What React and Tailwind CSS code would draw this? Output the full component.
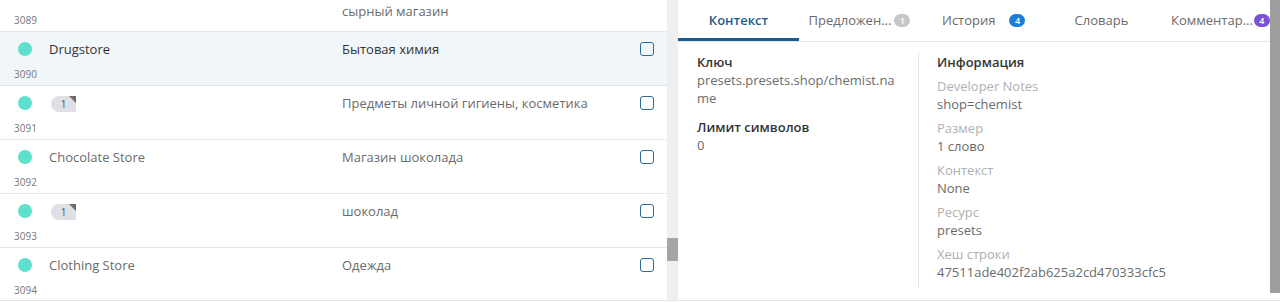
import React from 'react';

const rows = [
  { id: 3089, tr: 'сырный магазин', cut: true },
  { id: 3090, name: 'Drugstore', tr: 'Бытовая химия', active: true },
  { id: 3091, badge: true, tr: 'Предметы личной гигиены, косметика' },
  { id: 3092, name: 'Chocolate Store', tr: 'Магазин шоколада' },
  { id: 3093, badge: true, tr: 'шоколад' },
  { id: 3094, name: 'Clothing Store', tr: 'Одежда' },
];

const info = [
  ['Developer Notes', 'shop=chemist'],
  ['Размер', '1 слово'],
  ['Контекст', 'None'],
  ['Ресурс', 'presets'],
  ['Хеш строки', '47511ade402f2ab625a2cd470333cfc5'],
];

function Badge() {
  return (
    <div className="relative w-[25px] h-[16px] mt-[2px] ml-[2px] bg-[#dfe0e5] rounded-l-full flex items-center justify-center text-[10px] text-[#555] overflow-hidden">
      1
      <span className="absolute top-0 right-0 w-0 h-0 border-t-[7px] border-l-[7px] border-t-[#6b6b6b] border-l-transparent" />
    </div>
  );
}

function Row({ row }) {
  const tone = row.active ? 'text-[#333]' : 'text-[#6b6b6b]';
  return (
    <div className={`flex h-[54px] border-b border-[#e4e6ea] ${row.active ? 'bg-[#f1f6fb]' : 'bg-white'}`}>
      <div className="w-[49px] shrink-0 flex flex-col pl-[14px] pt-[10px]">
        <div className={`ml-[4px] w-[14px] h-[14px] rounded-full ${row.cut ? '' : 'bg-[#5fe0cd]'}`} />
        <div className="mt-[12px] text-[10px] leading-[12px] text-[#777]">{row.id}</div>
      </div>
      <div className={`w-[293px] shrink-0 pt-[8px] text-[13px] leading-[18px] ${tone}`}>
        {row.badge ? <Badge /> : row.name}
      </div>
      {/* first row is scrolled: only the wrapped tail of its translation shows */}
      <div className={`flex-1 text-[13px] leading-[18px] ${row.cut ? 'pt-[24px]' : 'pt-[8px]'} ${tone}`}>
        {row.tr}
      </div>
      <div className="w-[27px] shrink-0 pt-[10px]">
        {!row.cut && <div className="w-[14px] h-[14px] rounded-[3px] border-[1.5px] border-[#2d6c97]" />}
      </div>
    </div>
  );
}

function Tab({ label, count, color, active, className }) {
  return (
    <div
      className={`h-[41px] flex items-center text-[13px] border-b-[3px] pt-[3px] whitespace-nowrap overflow-hidden ${
        active ? 'border-[#1d5b8d] text-[#1d5b8d] font-semibold' : 'border-transparent text-[#6b6b6b]'
      } ${className}`}
    >
      <span>{label}</span>
      {count && (
        <span className={`shrink-0 h-[13px] min-w-[16px] px-[4px] rounded-full text-[9px] leading-[13px] text-white font-semibold text-center ${color}`}>
          {count}
        </span>
      )}
    </div>
  );
}

export default function App() {
  return (
    <div className="w-[1280px] h-[302px] bg-white overflow-hidden font-['Open_Sans',sans-serif]">
      <div className="flex h-[301px] border-b border-[#e3e3e3]">
        {/* string list */}
        <div className="w-[667px] shrink-0 overflow-hidden">
          <div className="-mt-[22px]">
            {rows.map((r) => (
              <Row key={r.id} row={r} />
            ))}
          </div>
        </div>

        {/* list scrollbar */}
        <div className="w-[11px] shrink-0 bg-[#efefef] pt-[238px]">
          <div className="h-[23px] bg-[#a5a5a5]" />
        </div>

        {/* details panel */}
        <div className="w-[592px] shrink-0 flex flex-col">
          <div className="flex border-b border-[#e4e4e4] h-[42px]">
            <Tab label="Контекст" active className="w-[121px] justify-center" />
            <Tab label="Предложен..." count="1" color="bg-[#c6c6c6]" className="w-[121px] justify-center gap-[3px]" />
            <Tab label="История" count="4" color="bg-[#1b7fd8]" className="w-[121px] pl-[22px] gap-[14px]" />
            <Tab label="Словарь" className="w-[121px] justify-center" />
            <Tab label="Комментар..." count="4" color="bg-[#7b52d3]" className="flex-1 pl-[9px] gap-[1px]" />
          </div>

          <div className="flex pt-[10px] pl-[19px]">
            <div className="w-[221px] shrink-0 pr-[19px] pt-[1px] text-[13px] leading-[18px]">
              <div className="font-semibold text-[#333]">Ключ</div>
              <div className="text-[#6b6b6b] break-all">presets.presets.shop/chemist.name</div>
              <div className="mt-[11px] font-semibold text-[#333]">Лимит символов</div>
              <div className="text-[#6b6b6b]">0</div>
            </div>
            <div className="border-l border-[#e6e6e6] pl-[18px] pt-[1px] pb-[7px] text-[13px] leading-[18px]">
              <div className="font-semibold text-[#333]">Информация</div>
              {info.map(([k, v]) => (
                <div key={k} className="mt-[6px]">
                  <div className="text-[#b0b0b0]">{k}</div>
                  <div className="text-[#6b6b6b]">{v}</div>
                </div>
              ))}
            </div>
          </div>
        </div>

        {/* panel scrollbar */}
        <div className="w-[10px] shrink-0 h-[293px] bg-[#9e9e9e]" />
      </div>
    </div>
  );
}
